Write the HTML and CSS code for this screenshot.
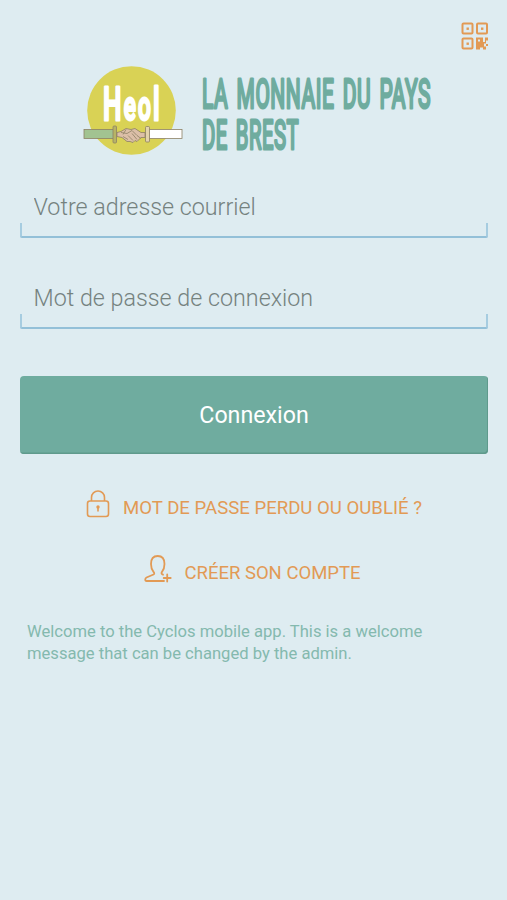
FILE: index.html
```html
<!DOCTYPE html>
<html lang="fr">
<head>
    <meta charset="UTF-8">
    <meta name="viewport" content="width=device-width, initial-scale=1.0">
    <title>Heol - Connexion</title>
    <link rel="stylesheet" href="styles.css">
</head>
<body>
    <div class="container">
        <div class="top-bar">
            <svg class="qr-icon" viewBox="0 0 28 28" width="28" height="28">
                <g fill="none" stroke="#e29a55" stroke-width="2">
                    <rect x="1.5" y="1.5" width="10" height="10" rx="1"/>
                    <rect x="16" y="1.5" width="10" height="10" rx="1"/>
                    <rect x="1.5" y="16.5" width="10" height="10" rx="1"/>
                </g>
                <g fill="#e29a55">
                    <rect x="5.5" y="5.5" width="2.4" height="2.4"/>
                    <rect x="20" y="5.5" width="2.4" height="2.4"/>
                    <rect x="5.5" y="20.5" width="2.4" height="2.4"/>
                    <path d="M15 15.5h7v4.5h2v-4.5h3v3h-2v3h-2v3h2v3h-3v-2h-3v2h-4z"/>
                    <rect x="25" y="22" width="2" height="2"/>
                </g>
                <rect x="17" y="17.5" width="2" height="2" fill="#deecf1"/>
            </svg>
        </div>

        <div class="logo">
            <svg class="logo-badge" viewBox="0 0 100 90" width="100" height="90">
                <circle cx="48.5" cy="44.5" r="44.3" fill="#d9d255"/>
                <text class="badge-text" x="20" y="54" textLength="59" lengthAdjust="spacingAndGlyphs">H<tspan class="badge-small">eo</tspan>l</text>
                <g stroke="#8d8065" stroke-width="0.8">
                    <rect x="1" y="63.5" width="30" height="9" fill="#a2c391"/>
                    <rect x="30" y="60" width="3.5" height="17" rx="1" fill="#b7b465"/>
                    <rect x="66" y="63.5" width="33" height="9" fill="#fff"/>
                    <rect x="62.5" y="60.5" width="4" height="15.5" rx="1" fill="#e3d3ac"/>
                    <path fill="#dcbfa8" d="M34 66.5l4-1 5-3 5 1 4-1 6 4 4 0v5l-4 0-4 4-2-1-2 2-3-1-3 0-5-4-5-1z"/>
                    <path fill="none" d="M38 66.5l6 1 5-3 5 5 4 3M43 63.5l-3 5M45 69.5l5 5M49 67.5l5 6M40 70.5l5 3"/>
                </g>
            </svg>
            <svg class="logo-title" viewBox="0 0 234 84" width="234" height="84">
                <text class="title-text" x="1" y="36.5" textLength="229" lengthAdjust="spacingAndGlyphs">LA MONNAIE DU PAYS</text>
                <text class="title-text" x="1" y="78" textLength="97" lengthAdjust="spacingAndGlyphs">DE BREST</text>
            </svg>
        </div>

        <form class="login-form">
            <div class="field">
                <input type="text" placeholder="Votre adresse courriel">
            </div>
            <div class="field">
                <input type="password" placeholder="Mot de passe de connexion">
            </div>
            <button type="button" class="login-button">Connexion</button>
        </form>

        <div class="links">
            <a class="link link-password">
                <svg viewBox="0 0 24 28" width="24" height="28">
                    <g fill="none" stroke="#e29a55" stroke-width="1.6">
                        <rect x="1.5" y="11" width="21" height="15.5" rx="2.5"/>
                        <path d="M5.5 11V7.5a6.5 6.5 0 0 1 13 0V11"/>
                        <path d="M12 17v4.5"/>
                    </g>
                    <circle cx="12" cy="17" r="1.7" fill="#e29a55"/>
                </svg>
                <span>MOT DE PASSE PERDU OU OUBLIÉ ?</span>
            </a>
            <a class="link link-account">
                <svg viewBox="0 0 28 28" width="28" height="28">
                    <g fill="none" stroke="#e29a55" stroke-width="1.8" stroke-linecap="round" stroke-linejoin="round">
                        <path d="M20 26H2.5C.8 26 .8 23.5 2.5 22.5L9.5 19.5C10.5 19 10.5 18 9.5 16.8C8 15 7 12.500 7 9C7 4 9 1 13.7 1S20.5 4 20.5 9C20.5 12.5 19.5 15 18 16.8C17.2 18 17.3 19 19 19.7"/>
                        <path d="M23.2 19.5v7M19.7 23h7"/>
                    </g>
                </svg>
                <span>CRÉER SON COMPTE</span>
            </a>
        </div>

        <p class="welcome">Welcome to the Cyclos mobile app. This is a welcome<br>message that can be changed by the admin.</p>
    </div>
</body>
</html>
```
FILE: styles.css
```css
* {
    box-sizing: border-box;
}
body, html {
    margin: 0;
    font-family: Roboto, "Liberation Sans", sans-serif;
    background-color: #deecf1;
}
.container {
    height: 900px;
    padding: 22px 19px 0 20px;
}
.top-bar {
    display: flex;
    justify-content: flex-end;
    height: 44px;
}
.qr-icon {
    margin-right: -1px;
}
.logo {
    display: flex;
    align-items: flex-start;
    gap: 18px;
    height: 111px;
    padding-left: 63px;
}
.logo svg {
    overflow: visible;
}
.logo-title {
    margin-top: 5px;
}
.badge-text {
    fill: #fff;
    stroke: #fff;
    stroke-width: 3;
    stroke-linejoin: round;
    font-size: 46px;
    font-weight: 500;
    letter-spacing: 4px;
}
.badge-small {
    font-size: 40px;
}
.title-text {
    fill: #6fac9f;
    stroke: #6fac9f;
    stroke-width: 3;
    stroke-linejoin: round;
    font-size: 40px;
    font-weight: 400;
    letter-spacing: 1px;
    word-spacing: 5px;
}
.field {
    position: relative;
    height: 61px;
    margin-bottom: 30px;
}
/* short side ticks joined by the underline */
.field::after {
    content: "";
    position: absolute;
    left: 0;
    right: 0;
    bottom: 0;
    height: 13px;
    border: 2px solid #a6cce0;
    border-top: none;
    border-bottom-color: #93c0d8;
    border-radius: 0 0 2px 2px;
    pointer-events: none;
}
.field input {
    width: 100%;
    height: 59px;
    padding: 0 13.5px;
    border: none;
    outline: none;
    background: transparent;
    font-family: inherit;
    font-size: 23.3px;
    font-weight: 300;
}
.field input::placeholder {
    color: #75827f;
    opacity: 1;
}
.login-button {
    display: block;
    width: 100%;
    height: 78px;
    margin-top: 47px;
    border: none;
    border-radius: 4px;
    background-color: #6fac9f;
    box-shadow: inset -1px -1.5px 0 #5f9a8c;
    color: #fff;
    font-family: inherit;
    font-size: 23.2px;
}
.links {
    display: flex;
    flex-direction: column;
    align-items: center;
    margin-top: 36px;
}
.link {
    display: flex;
    align-items: center;
    height: 28px;
    color: #e29a55;
    font-size: 18.6px;
}
.link-password {
    gap: 13px;
    margin-bottom: 37px;
}
.link-account {
    gap: 12px;
    padding-right: 3px;
    font-size: 18.5px;
}
.link span {
    padding-top: 7px;
}
.welcome {
    margin: 38px 7px 0;
    color: #84b9ae;
    font-size: 16.6px;
    line-height: 22px;
}
```
